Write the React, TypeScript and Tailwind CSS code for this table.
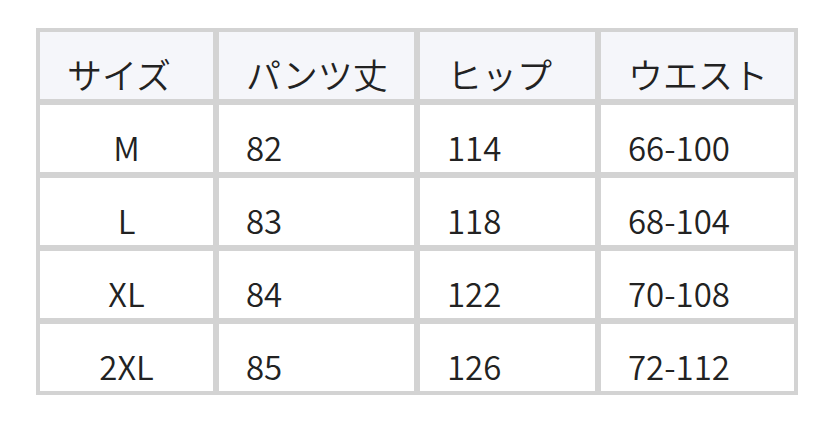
import React from "react";

const headers = ["サイズ", "パンツ丈", "ヒップ", "ウエスト"];

const rows = [
    ["M", "82", "114", "66-100"],
    ["L", "83", "118", "68-104"],
    ["XL", "84", "122", "70-108"],
    ["2XL", "85", "126", "72-112"],
];

const App = () => {
    return (
        <div
            className="h-[422px] w-[834px] bg-white pl-[36px] pt-[28px] text-[#222222]"
            style={{ fontFamily: '"Noto Sans CJK JP", "Noto Sans", sans-serif' }}
        >
            <div className="grid w-fit grid-cols-[173px_195px_175px_193px] gap-[6px] bg-[#d3d3d3] p-[4px] text-[33px] font-[350] leading-[33px]">
                {headers.map((h) => (
                    <div key={h} className="h-[67px] bg-[#f5f6fa] pl-[27px] pt-[24px] text-[35px] leading-[35px]">
                        {h}
                    </div>
                ))}
                {rows.map((row) =>
                    row.map((cell, i) => (
                        <div
                            key={row[0] + i}
                            className={
                                i === 0
                                    ? "h-[67px] bg-white pt-[26px] text-center"
                                    : "h-[67px] bg-white pl-[27px] pt-[26px]"
                            }
                        >
                            {cell}
                        </div>
                    ))
                )}
            </div>
        </div>
    );
};

export default App;
